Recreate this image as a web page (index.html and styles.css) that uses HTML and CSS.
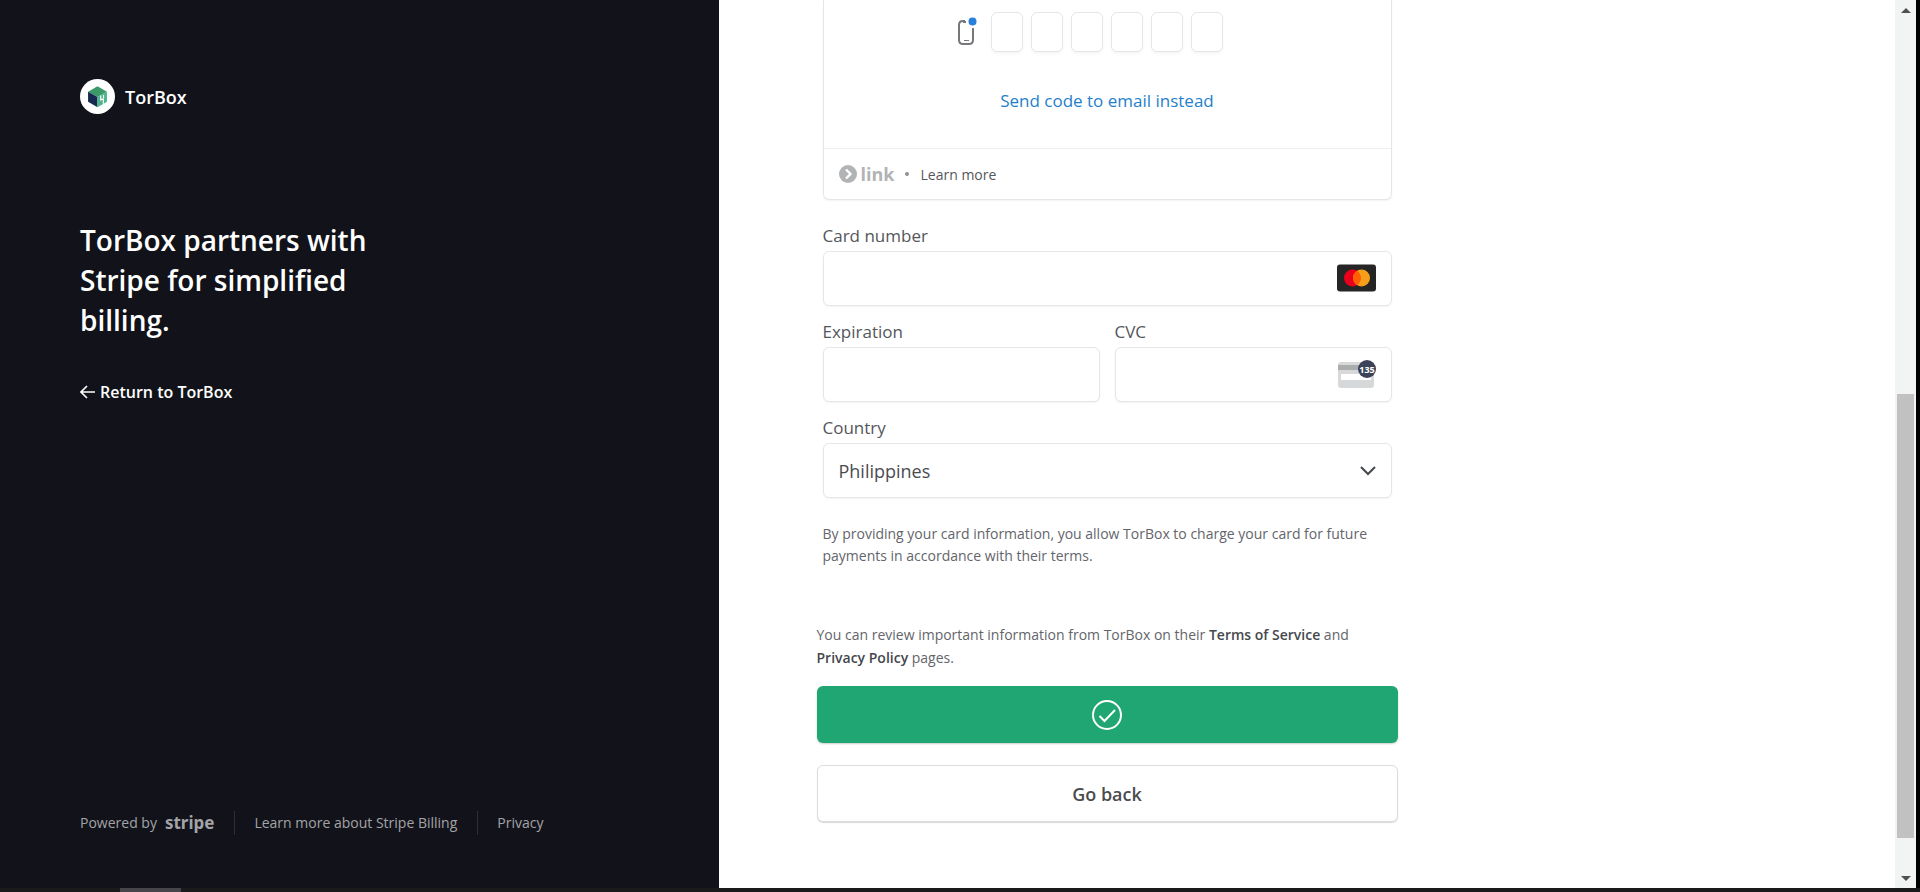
FILE: index.html
```html
<!DOCTYPE html>
<html lang="en">
<head>
    <meta charset="UTF-8">
    <meta name="viewport" content="width=device-width, initial-scale=1.0">
    <title>TorBox billing</title>
    <link rel="stylesheet" href="styles.css">
</head>
<body>
    <div class="page">
        <aside class="sidebar">
            <div class="brand">
                <svg class="brand-logo" viewBox="0 0 36 36" aria-hidden="true">
                    <circle cx="18" cy="18" r="18" fill="#fff"/>
                    <path d="M18 7.500 27.700 13 18 18.500 8.300 13z" fill="#3a9a68"/>
                    <path d="M8.300 13 18 18.500V29L8.300 23.500z" fill="#16294f"/>
                    <path d="M27.700 13 18 18.500V29l9.700-5.500z" fill="#4cb58c"/>
                    <path d="M21.300 17v4.500l2.700-1v5M24.200 16.500v3" fill="none" stroke="#fff" stroke-width="1.200"/>
                </svg>
                <span class="brand-name">TorBox</span>
            </div>
            <h1>TorBox partners with Stripe for simplified billing.</h1>
            <a class="return-link" href="#">
                <svg viewBox="0 0 15 14" aria-hidden="true"><path d="M7 1 1 7l6 6M1 7h14" fill="none" stroke="currentColor" stroke-width="1.600"/></svg>
                Return to TorBox
            </a>
            <footer class="footer">
                <a class="powered" href="#">Powered by <span class="stripe">stripe</span></a>
                <a class="footer-link" href="#">Learn more about Stripe Billing</a>
                <a class="footer-link" href="#">Privacy</a>
            </footer>
        </aside>

        <main class="content">
            <form class="form">
                <div class="fields">
                    <section class="link-card">
                        <div class="code-row">
                            <svg class="phone" viewBox="0 0 20 30" aria-hidden="true">
                                <path d="M8 4H6Q2 4 2 8v15q0 4 4 4h6q4 0 4-4V11" fill="none" stroke="#75777b" stroke-width="2"/>
                                <path d="M6 4h3v2H6zM7 23h5v1H7z" fill="#75777b"/>
                                <circle cx="15.500" cy="4.500" r="4" fill="#2a7fdb"/>
                            </svg>
                            <input type="text" maxlength="1" aria-label="Digit 1">
                            <input type="text" maxlength="1" aria-label="Digit 2">
                            <input type="text" maxlength="1" aria-label="Digit 3">
                            <input type="text" maxlength="1" aria-label="Digit 4">
                            <input type="text" maxlength="1" aria-label="Digit 5">
                            <input type="text" maxlength="1" aria-label="Digit 6">
                        </div>
                        <a class="send-email" href="#">Send code to email instead</a>
                        <div class="link-footer">
                            <svg class="link-icon" viewBox="0 0 18 18" aria-hidden="true">
                                <circle cx="9" cy="9" r="9" fill="#b1b3b5"/>
                                <path d="M7 4.500 11.500 9 7 13.500" fill="none" stroke="#fff" stroke-width="2.400"/>
                            </svg>
                            <span class="link-name">link</span>
                            <span class="dot"></span>
                            <a href="#">Learn more</a>
                        </div>
                    </section>

                    <div class="field">
                        <label for="card">Card number</label>
                        <div class="control">
                            <input type="text" id="card">
                            <svg class="card-icon" viewBox="0 0 39 27" aria-hidden="true">
                                <rect width="39" height="27" rx="3" fill="#252525"/>
                                <circle cx="15.500" cy="13.500" r="8.500" fill="#eb001b"/>
                                <circle cx="24.500" cy="13.500" r="8.500" fill="#f79e1b"/>
                                <path d="M20 6.300a8.500 8.500 0 0 1 0 14.400a8.500 8.500 0 0 1 0-14.400z" fill="#ff5f00"/>
                            </svg>
                        </div>
                    </div>
                    <div class="field-row">
                        <div class="field">
                            <label for="expiration">Expiration</label>
                            <div class="control"><input type="text" id="expiration"></div>
                        </div>
                        <div class="field">
                            <label for="cvc">CVC</label>
                            <div class="control">
                                <input type="text" id="cvc">
                                <svg class="card-icon" viewBox="0 0 39 28" aria-hidden="true">
                                    <rect x="1" y="2" width="36" height="26" rx="3" fill="#d6d8da"/>
                                    <path d="M1 5h36v5H1z" fill="#aaacae"/>
                                    <path d="M4 14h30v6H4z" fill="#fff"/>
                                    <circle cx="30" cy="9" r="9" fill="#3c4257"/>
                                    <text class="cvc-digits" x="30" y="13" text-anchor="middle">135</text>
                                </svg>
                            </div>
                        </div>
                    </div>
                    <div class="field">
                        <label for="country">Country</label>
                        <div class="control">
                            <select id="country">
                                <option>Philippines</option>
                            </select>
                            <svg class="chevron" viewBox="0 0 16 10" aria-hidden="true"><path d="M1 1l7 7 7-7" fill="none" stroke="#45484c" stroke-width="2"/></svg>
                        </div>
                    </div>
                    <p class="mandate">By providing your card information, you allow TorBox to charge your card for future payments in accordance with their terms.</p>
                </div>

                <p class="terms">You can review important information from TorBox on their <a href="#">Terms of Service</a> and <a href="#">Privacy Policy</a> pages.</p>
                <button class="submit" type="submit" aria-label="Done">
                    <svg viewBox="0 0 30 30" aria-hidden="true">
                        <circle cx="15" cy="15" r="14" fill="none" stroke="#fff" stroke-width="2"/>
                        <path d="M7.500 16l5 5L23 10" fill="none" stroke="#fff" stroke-width="2"/>
                    </svg>
                </button>
                <button class="back" type="button">Go back</button>
            </form>
        </main>

        <div class="scrollbar">
            <span class="arrow up"></span>
            <span class="thumb"></span>
            <span class="arrow down"></span>
        </div>
    </div>
    <div class="taskbar"><span class="task"></span></div>
</body>
</html>
```

FILE: styles.css
```css
* {
    box-sizing: border-box;
}

body {
    margin: 0;
    min-height: 100vh;
    display: flex;
    flex-direction: column;
    background-color: #181818;
    font-family: "Open Sans", "Noto Sans", sans-serif;
    color: #54565b;
}

a {
    color: inherit;
    text-decoration: none;
}

svg {
    display: block;
}

.page {
    flex: 1;
    display: flex;
    border-right: 4px solid #000;
}

/* left panel */
.sidebar {
    flex: 0 0 37.5%;
    display: flex;
    flex-direction: column;
    align-items: flex-start;
    padding: 79px 80px 49px;
    background-color: #12131a;
    color: #fff;
}

.brand {
    display: flex;
    align-items: center;
    gap: 10px;
}

.brand-logo {
    width: 35px;
    height: 35px;
}

.brand-name {
    font-size: 18px;
    line-height: 24px;
    font-weight: 600;
}

h1 {
    max-width: 320px;
    margin: 106px 0 40px;
    font-size: 28px;
    line-height: 40px;
    font-weight: 600;
}

.return-link {
    display: flex;
    align-items: center;
    gap: 5px;
    font-size: 16px;
    line-height: 24px;
    font-weight: 600;
}

.return-link svg {
    width: 15px;
    height: 14px;
}

.footer {
    display: flex;
    align-items: center;
    margin-top: auto;
    font-size: 14px;
    line-height: 24px;
    color: #a3a4a8;
}

.powered {
    display: flex;
    align-items: center;
    gap: 8px;
    height: 32px;
}

.stripe {
    font-family: "Noto Sans", "Open Sans", sans-serif;
    font-size: 17px;
    font-weight: 700;
}

.footer-link {
    margin-left: 20px;
    padding-left: 19px;
    border-left: 1px solid #2e2f36;
}

/* right panel */
.content {
    flex: 1;
    padding: 0 98px;
    background-color: #fff;
}

.form {
    max-width: 581px;
}

.fields {
    padding: 0 6px;
}

.link-card {
    border: 1px solid #e6e6e6;
    border-top: none;
    border-radius: 0 0 6px 6px;
    padding-top: 12px;
    box-shadow: 0 1px 2px rgba(0, 0, 0, 0.05);
}

.code-row {
    display: flex;
    justify-content: center;
    align-items: center;
    gap: 8px;
    padding-right: 34px;
}

.phone {
    width: 20px;
    height: 30px;
    margin-right: 6px;
}

.code-row input {
    width: 32px;
    height: 40px;
    padding: 0;
    border: 1px solid #e6e6e6;
    border-radius: 6px;
    box-shadow: 0 2px 3px rgba(0, 0, 0, 0.04);
    text-align: center;
}

.send-email {
    display: block;
    padding: 36px 0 34px;
    font-size: 17px;
    line-height: 26px;
    text-align: center;
    color: #1f80cc;
}

.link-footer {
    display: flex;
    align-items: center;
    height: 51px;
    padding-left: 15px;
    border-top: 1px solid #eee;
    font-size: 14px;
}

.link-icon {
    width: 18px;
    height: 18px;
}

.link-name {
    margin-left: 4px;
    font-size: 18px;
    line-height: 24px;
    font-weight: 700;
    color: #b1b3b5;
}

.dot {
    width: 4px;
    height: 4px;
    margin: 0 11px;
    border-radius: 50%;
    background-color: #909296;
}

.field {
    flex: 1;
    margin-top: 13px;
}

.link-card + .field {
    margin-top: 23px;
}

label {
    display: block;
    margin-bottom: 2px;
    font-size: 17px;
    line-height: 26px;
}

.field-row {
    display: flex;
    gap: 15px;
}

.control {
    position: relative;
}

.control input,
.control select {
    display: block;
    width: 100%;
    height: 55px;
    padding: 0 15px;
    border: 1px solid #e6e6e6;
    border-radius: 6px;
    background-color: #fff;
    box-shadow: 0 1px 2px rgba(0, 0, 0, 0.05);
    font: inherit;
    font-size: 18px;
    color: #4a4c50;
    appearance: none;
}

.card-icon {
    position: absolute;
    top: 13px;
    right: 16px;
    width: 39px;
    height: 28px;
}

.cvc-digits {
    font-family: "Noto Sans", sans-serif;
    font-size: 9px;
    font-weight: 700;
    fill: #fff;
}

.chevron {
    position: absolute;
    top: 23px;
    right: 16px;
    width: 16px;
    height: 10px;
}

.mandate,
.terms {
    margin: 0;
    font-size: 14px;
    line-height: 22px;
    color: #63656a;
}

.mandate {
    margin-top: 25px;
}

.terms {
    margin: 56px 0 17px;
    line-height: 23px;
}

.terms a {
    font-weight: 600;
    color: #45474c;
}

button {
    display: flex;
    align-items: center;
    justify-content: center;
    width: 100%;
    height: 57px;
    border-radius: 6px;
    font: inherit;
    font-size: 18px;
    font-weight: 600;
    cursor: pointer;
}

.submit {
    border: none;
    background-color: #20a672;
    box-shadow: 0 1px 2px rgba(0, 0, 0, 0.2);
}

.submit svg {
    width: 30px;
    height: 30px;
}

.back {
    margin: 22px 0 66px;
    border: 1px solid #dcdcdc;
    background-color: #fff;
    box-shadow: 0 1px 1px rgba(0, 0, 0, 0.15);
    color: #4a4c50;
}

/* window edges */
.scrollbar {
    display: grid;
    grid-template-rows: 20px 374fr 444fr 30fr 20px;
    width: 21px;
    padding: 0 2px;
    background-color: #f2f3f3;
}

.thumb {
    grid-row: 3;
    background-color: #c1c1c1;
}

.arrow {
    align-self: center;
    justify-self: center;
    border: 5px solid transparent;
}

.up {
    border-top: none;
    border-bottom-color: #505050;
}

.down {
    grid-row: 5;
    border-bottom: none;
    border-top-color: #505050;
}

.taskbar {
    height: 4px;
    padding-left: 120px;
    background-color: #1a1a1a;
}

.task {
    display: block;
    width: 61px;
    height: 4px;
    background-color: #45454a;
}
```
